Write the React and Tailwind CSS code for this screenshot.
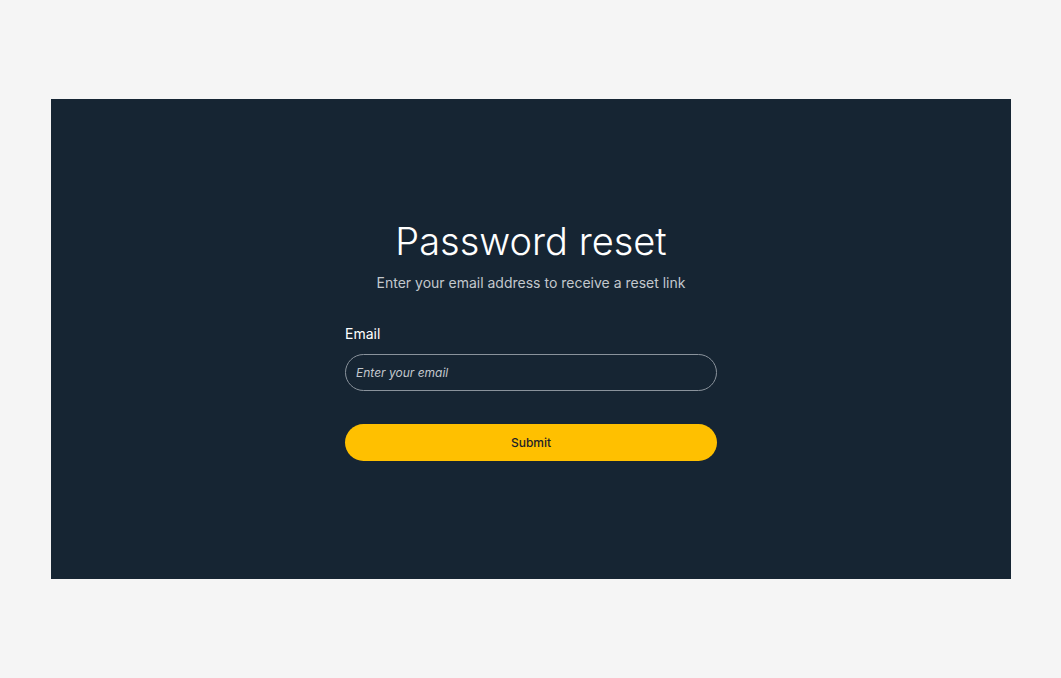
export default function App() {
  return (
    <div className="min-h-screen bg-[#f5f5f5] px-[51px] pt-[99px] pb-[99px] font-['Inter',sans-serif]">
      <div className="flex h-[480px] w-[960px] items-center justify-center bg-[#162533]">
        <div className="w-[372px] pt-[2px]">
          <h1 className="text-center text-[38px] leading-[44px] font-light text-white">
            Password reset
          </h1>
          <p className="mt-[10px] text-center text-[14px] leading-[20px] text-[#c3c8cd]">
            Enter your email address to receive a reset link
          </p>
          <label className="mt-[31px] block text-[14px] leading-[20px] text-white">
            Email
          </label>
          <input
            type="email"
            placeholder="Enter your email"
            className="mt-[10px] block h-[37px] w-full rounded-full border border-[#8a939c] bg-transparent px-[10px] text-[12px] italic text-white placeholder:text-[#c3c8cd] outline-none"
          />
          <button className="mt-[33px] block h-[37px] w-full rounded-full bg-[#ffc000] text-[12px] font-medium text-[#1d2228]">
            Submit
          </button>
        </div>
      </div>
    </div>
  );
}
